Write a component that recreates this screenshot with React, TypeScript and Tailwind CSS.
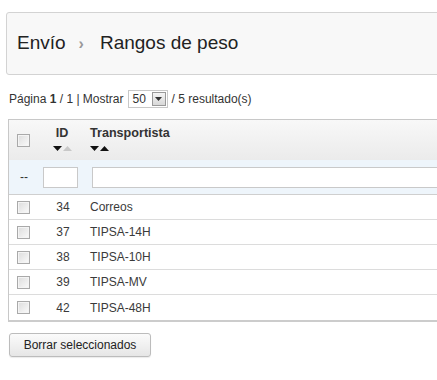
import React from "react";

const rows = [
  { id: 34, name: "Correos" },
  { id: 37, name: "TIPSA-14H" },
  { id: 38, name: "TIPSA-10H" },
  { id: 39, name: "TIPSA-MV" },
  { id: 42, name: "TIPSA-48H" },
];

function Check() {
  return (
    <span className="block w-[13px] h-[13px] border border-[#a9a9a9] bg-gradient-to-br from-[#dcdcdc] to-[#fbfbfb] shadow-[inset_0_0_0_1px_#f4f4f4]" />
  );
}

function Down({ c }: { c: string }) {
  return (
    <svg width="9" height="5" viewBox="0 0 9 5" className="block">
      <path d="M0 0H9L4.5 5Z" fill={c} />
    </svg>
  );
}
function Up({ c }: { c: string }) {
  return (
    <svg width="9" height="5" viewBox="0 0 9 5" className="block">
      <path d="M0 5H9L4.5 0Z" fill={c} />
    </svg>
  );
}

export default function App() {
  return (
    <div
      className="w-[437px] h-[380px] overflow-hidden bg-white text-[#333] text-[12px]"
      style={{ fontFamily: '"Liberation Sans", Arial, sans-serif' }}
    >
      <div className="ml-[6px] mt-[12px] w-[460px] h-[63px] border border-[#d3d3d3] rounded-[3px] bg-[#f8f8f8] flex items-center pl-[10px] text-[19px] text-[#222]">
        <span>Envío</span>
        <span className="ml-[13px] mr-[16px] text-[#999] text-[16px] font-bold">›</span>
        <span>Rangos de peso</span>
      </div>

      <div className="mt-[15px] ml-[9px] h-[18px] flex items-center text-[12px] text-[#333]">
        <span>
          Página <b>1</b> / 1 | Mostrar
        </span>
        <span className="ml-[4px] mr-[4px] h-[18px] w-[40px] border border-[#c8c8c8] bg-white flex items-center">
          <span className="pl-[4px] flex-1">50</span>
          <span className="w-[14px] h-[14px] mr-[1px] border border-[#999] bg-gradient-to-b from-[#f4f4f4] to-[#d8d8d8] flex items-center justify-center">
            <svg width="7" height="4" viewBox="0 0 7 4">
              <path d="M0 0H7L3.5 4Z" fill="#333" />
            </svg>
          </span>
        </span>
        <span>/ 5 resultado(s)</span>
      </div>

      <div className="mt-[11px] ml-[8px] w-[460px] border-l border-t border-[#c8c8c8] border-b-2 border-b-[#cccccc]">
        <div className="h-[40px] flex bg-gradient-to-b from-[#f8f8f8] to-[#ebebeb]">
          <div className="w-[32px] flex items-center pl-[8px]">
            <Check />
          </div>
          <div className="w-[42px] flex flex-col items-center pt-[5px]">
            <span className="font-bold text-[12.6px] text-[#333] leading-[16px]">ID</span>
            <span className="flex gap-[1px] mt-[5px] ml-[1px]">
              <Down c="#111" />
              <Up c="#c8c8c8" />
            </span>
          </div>
          <div className="flex flex-col pl-[7px] pt-[5px]">
            <span className="font-bold text-[12.6px] text-[#333] leading-[16px]">Transportista</span>
            <span className="flex gap-[1px] mt-[5px]">
              <Down c="#111" />
              <Up c="#111" />
            </span>
          </div>
        </div>
        <div className="h-[35px] flex items-center bg-[#eef5fb] border-b border-[#cfcfcf]">
          <div className="w-[32px] pl-[11px] text-[#333]">--</div>
          <div className="w-[42px] flex pl-[2px]">
            <span className="block w-[35px] h-[21px] border border-[#c9c9c9] bg-white" />
          </div>
          <div className="flex-1 pl-[9px]">
            <span className="block h-[21px] border border-[#c9c9c9] bg-white" />
          </div>
        </div>
        {rows.map((r, i) => (
          <div
            key={r.id}
            className={`h-[25px] flex items-center text-[12px] text-[#3a3a3a] ${i < rows.length - 1 ? "border-b border-[#dcdcdc]" : ""}`}
          >
            <div className="w-[32px] flex pl-[8px]">
              <Check />
            </div>
            <div className="w-[42px] text-center pl-[2px]">{r.id}</div>
            <div className="pl-[7px]">{r.name}</div>
          </div>
        ))}
      </div>

      <div className="mt-[11px] ml-[9px]">
        <button className="w-[142px] h-[24px] border border-[#bcbcbc] rounded-[3px] bg-gradient-to-b from-[#fbfbfb] to-[#e6e6e6] text-[12px] text-[#222] shadow-[0_1px_1px_rgba(0,0,0,0.08)]">
          Borrar seleccionados
        </button>
      </div>
    </div>
  );
}
